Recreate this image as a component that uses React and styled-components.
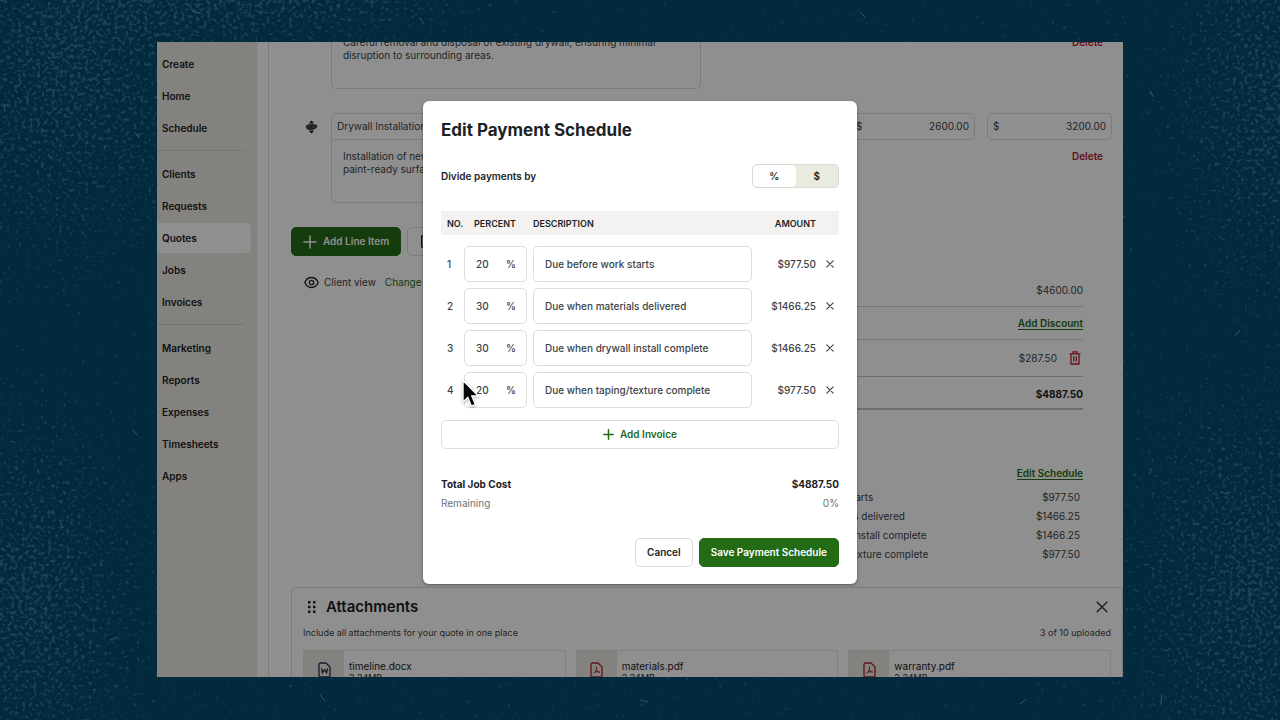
import React, {useState} from 'react'
import styled, {createGlobalStyle, css} from 'styled-components'

const colors = {
  ink: '#1c2326',
  text: '#3b4347',
  muted: '#6b7276',
  green: '#246b16',
  red: '#b3202c',
  line: '#dcdcdc',
  sand: '#ebe8e0',
}

const GlobalStyle = createGlobalStyle`
  * {
    box-sizing: border-box;
  }
  body {
    margin: 0;
    background-color: #02293c;
    color: ${colors.text};
    font-family: Inter, 'Liberation Sans', sans-serif;
    font-size: 10px;
    line-height: 13px;
  }
  button, input, textarea {
    font: inherit;
    color: inherit;
  }
  button {
    cursor: pointer;
  }
`

const Stage = styled.div`
  position: relative;
  height: 100vh;
  padding: 42px 157px 43px;
`

const Texture = styled.svg`
  position: absolute;
  inset: 0;
  width: 100%;
  height: 100%;
`

const Frame = styled.div`
  position: relative;
  display: flex;
  height: 100%;
  overflow: hidden;
  background-color: white;
`

/* Sidebar */

const Sidebar = styled.nav`
  flex: 0 0 100px;
  padding: 7px 6px 0 0;
  background-color: ${colors.sand};
`

const NavDivider = styled.hr`
  margin: 7px 7px 8px 0;
  border: 0;
  border-top: 1px solid #d3d0c7;
`

const NavLink = styled.a`
  display: flex;
  align-items: center;
  height: 30px;
  margin-bottom: 2px;
  padding-left: 5px;
  border-radius: 0 5px 5px 0;
  background-color: ${props => props.$active ? 'white' : 'transparent'};
  color: ${colors.ink};
  font-weight: 600;
  text-decoration: none;
`

/* Quote page */

const Main = styled.main`
  flex: 1;
  min-width: 0;
  margin-left: 11px;
  padding: 0 11px 0 22px;
  border-left: 1px solid ${colors.line};
`

const LineItems = styled.div`
  display: flex;
  flex-direction: column;
  gap: 24px;
  margin-top: -43px;
`

const LineItemRow = styled.div`
  display: grid;
  grid-template-columns: 28px minmax(0, 1fr) repeat(3, 125px);
  grid-template-rows: 27px 63px;
  column-gap: 12px;
`

const DragHandle = styled.span`
  display: flex;
  align-items: center;
  justify-content: flex-end;
  padding-right: 1px;
`

const NameInput = styled.input`
  min-width: 0;
  padding: 0 5px;
  border: 1px solid ${colors.line};
  border-radius: 5px 5px 0 0;
  background: none;
`

const DescriptionInput = styled.textarea`
  grid-column: 2;
  padding: 10px 11px;
  border: 1px solid ${colors.line};
  border-top: 0;
  border-radius: 0 0 5px 5px;
  background: none;
  resize: none;
  overflow: hidden;
`

const MoneyField = styled.label`
  display: flex;
  align-items: center;
  padding: 0 5px;
  border: 1px solid ${colors.line};
  border-radius: 5px;

  input {
    flex: 1;
    min-width: 0;
    padding: 0;
    border: 0;
    background: none;
    text-align: right;
  }
`

const DeleteButton = styled.button`
  grid-column: 5;
  justify-self: end;
  align-self: start;
  margin: 10px 9px 0 0;
  padding: 0;
  border: 0;
  background: none;
  color: ${colors.red};
  font-weight: 600;
`

const Actions = styled.div`
  display: flex;
  gap: 6px;
  margin-top: 24px;
`

const Button = styled.button`
  display: flex;
  align-items: center;
  justify-content: center;
  gap: 6px;
  height: 29px;
  padding: 0 11px;
  border: 1px solid ${colors.line};
  border-radius: 5px;
  background-color: white;
  color: ${colors.ink};
  font-weight: 600;

  ${props => props.$primary && css`
    border-color: ${colors.green};
    background-color: ${colors.green};
    color: white;
  `}

  ${props => props.$wide && css`
    width: 100%;
    margin-top: 9px;
    color: ${colors.green};
  `}
`

const OptionalButton = styled(Button)`
  justify-content: flex-start;
  width: 130px;
`

const Summary = styled.div`
  display: flex;
  justify-content: space-between;
  padding-right: 29px;
`

const ClientView = styled.div`
  display: flex;
  align-items: center;
  gap: 5px;
  height: 16px;
  margin: 18px 0 0 13px;

  a {
    margin-left: 4px;
    color: ${colors.green};
    text-decoration: none;
  }
`

const Totals = styled.div`
  width: 318px;
  padding-top: 18px;
`

const TotalRow = styled.div`
  display: flex;
  align-items: center;
  justify-content: flex-end;
  gap: 12px;
  height: 33px;
  border-bottom: 1px solid #d0d2d3;

  ${props => props.$tall && css`
    height: 37px;
    padding-right: 2px;
    border-color: #bfc1c2;
  `}

  ${props => props.$last && css`
    padding-top: 3px;
    border-bottom: 2px solid #bfc1c2;
    color: ${colors.ink};
    font-weight: 700;
  `}
`

const GreenLink = styled.a`
  border-bottom: 1px solid ${colors.green};
  color: ${colors.green};
  font-weight: 600;
  line-height: 12px;
  text-decoration: none;
`

const IconButton = styled.button`
  display: inline-flex;
  padding: 0;
  border: 0;
  background: none;
  color: ${props => props.$danger ? colors.red : colors.text};
`

const ScheduleHead = styled.div`
  display: flex;
  justify-content: flex-end;
  margin: 57px 0 8px;
`

const ScheduleLine = styled.div`
  display: flex;
  justify-content: space-between;
  padding-right: 3px;
  line-height: 19px;
`

const Attachments = styled.section`
  margin: 23px -11px 0 0;
  padding: 10px 11px 0;
  border: 1px solid ${colors.line};
  border-radius: 5px 0 0 0;
`

const AttachmentsHead = styled.div`
  display: flex;
  align-items: center;
  gap: 10px;
  padding: 0 3px 0 5px;

  h2 {
    flex: 1;
    margin: 0;
    color: ${colors.ink};
    font-size: 15px;
    font-weight: 600;
    line-height: 18px;
  }
`

const AttachmentsNote = styled.div`
  display: flex;
  justify-content: space-between;
  margin: 10px 0 11px;
  font-size: 9px;
`

const Files = styled.div`
  display: grid;
  grid-template-columns: repeat(3, minmax(0, 1fr));
  gap: 10px;
`

const FileCard = styled.div`
  display: flex;
  height: 40px;
  border: 1px solid #e6e6e6;
  color: ${colors.ink};
`

const FileThumb = styled.span`
  display: flex;
  align-items: center;
  justify-content: center;
  width: 40px;
  background-color: ${colors.sand};
  color: ${props => props.$type === 'docx' ? '#2b2a52' : colors.red};
`

const FileInfo = styled.div`
  padding: 9px 0 0 5px;

  small {
    display: block;
    font-size: 9px;
    line-height: 10px;
  }
`

/* Modal */

const Scrim = styled.div`
  position: absolute;
  inset: 0;
  display: flex;
  align-items: flex-start;
  justify-content: center;
  padding-top: 59px;
  background-color: rgba(0, 0, 0, 0.44);
`

const Modal = styled.div`
  position: relative;
  width: 434px;
  padding: 17px 18px;
  border-radius: 6px;
  background-color: white;
  box-shadow: 0 1px 3px rgba(0, 0, 0, 0.4);
`

const ModalTitle = styled.h1`
  margin: 0;
  color: ${colors.ink};
  font-size: 17px;
  line-height: 24px;
`

const DivideRow = styled.div`
  display: flex;
  align-items: center;
  justify-content: space-between;
  margin: 22px 0 23px;
  color: ${colors.ink};
  font-weight: 600;
`

const Toggle = styled.div`
  display: flex;
  width: 87px;
  height: 24px;
  border: 1px solid #d9dbd2;
  border-radius: 5px;
  background-color: #eaebdf;
  overflow: hidden;
`

const ToggleOption = styled.button`
  flex: 1;
  padding: 0;
  border: 0;
  border-radius: 5px;
  background-color: ${props => props.$active ? 'white' : 'transparent'};
  font-weight: 600;
`

const PaymentTable = styled.table`
  width: 100%;
  table-layout: fixed;
  border-collapse: collapse;
  font-weight: 500;

  th {
    height: 24px;
    padding: 0;
    background-color: #f4f2f1;
    color: ${colors.ink};
    font-size: 9px;
    font-weight: 600;
    text-align: left;
    white-space: nowrap;
  }
  td {
    padding: 3px 0;
  }
  tbody tr:first-child td {
    padding-top: 11px;
  }
  th:first-child, td:first-child {
    padding-left: 6px;
  }
  th:nth-child(2) {
    padding-left: 10px;
  }
  td:nth-child(2) {
    padding-right: 6px;
  }
  th:nth-child(4), td:nth-child(4) {
    text-align: right;
  }
  td:nth-child(5) {
    padding-left: 10px;
  }
`

const Field = styled.label`
  display: flex;
  align-items: center;
  height: 36px;
  padding: 0 10px 0 11px;
  border: 1px solid ${colors.line};
  border-radius: 5px;

  input {
    flex: 1;
    width: 100%;
    min-width: 0;
    padding: 0;
    border: 0;
    outline: 0;
    background: none;
  }
`

const ModalTotals = styled.div`
  margin: 26px 0 25px;
`

const ModalTotal = styled.div`
  display: flex;
  justify-content: space-between;
  color: ${props => props.$strong ? colors.ink : colors.muted};
  font-weight: ${props => props.$strong ? 700 : 400};
  line-height: 19px;
`

const ModalActions = styled.div`
  display: flex;
  justify-content: flex-end;
  gap: 6px;
`

const Pointer = styled.svg`
  position: absolute;
  top: 278px;
  left: 37px;
  pointer-events: none;
  filter: drop-shadow(0 1px 1px rgba(0, 0, 0, 0.3));
`

/* Icons */

const PlusIcon = ({size = 14, weight = 1.5}) => (
  <svg width={size} height={size} viewBox="0 0 14 14" fill="none" stroke="currentColor" strokeWidth={weight} strokeLinecap="round">
    <path d="M7 1v12M1 7h12" />
  </svg>
)

const CrossIcon = ({size, weight = 1}) => (
  <svg width={size} height={size} viewBox="0 0 10 10" fill="none" stroke="currentColor" strokeWidth={weight} strokeLinecap="round">
    <path d="M1 1l8 8M9 1L1 9" />
  </svg>
)

const MoveIcon = () => (
  <svg width="13" height="14" viewBox="0 0 14 14" fill={colors.ink}>
    <path d="M7 0l3 3H4zM7 14l-3-3h6z" />
    <path d="M1 5.500Q4 3.200 8 3.600l5 1.200q.8 1.400-.4 3.200L8 10.500q-3.500.4-6-1.300Q.4 7.500 1 5.500z" opacity="0.85" />
    <path d="M3 7.500l3-2.500M6.500 9l4-3" stroke="#777" strokeWidth="0.600" />
  </svg>
)

const EyeIcon = () => (
  <svg width="15" height="13" viewBox="0 0 15 13" fill="none" stroke={colors.ink} strokeWidth="1.300">
    <path d="M.8 6.500C2.200 3.200 4.600 1.500 7.500 1.500s5.300 1.700 6.700 5c-1.400 3.300-3.800 5-6.700 5s-5.300-1.700-6.700-5z" />
    <circle cx="7.500" cy="6.500" r="2.200" />
  </svg>
)

const TrashIcon = () => (
  <svg width="12" height="14" viewBox="0 0 12 14" fill="none" stroke="currentColor" strokeWidth="1.300">
    <path d="M.5 2.800h11M4 2.500V.900h4v1.600M2 3v10h8V3M4.700 5.300v5.200M7.300 5.300v5.200" />
  </svg>
)

const GripIcon = () => (
  <svg width="8" height="12" viewBox="0 0 8 12" fill={colors.ink}>
    <path d="M0 0h2.500v2.500H0zM5 0h2.500v2.500H5zM0 4.700h2.500v2.500H0zM5 4.700h2.500v2.500H5zM0 9.400h2.500v2.500H0zM5 9.400h2.500v2.500H5z" />
  </svg>
)

const FileIcon = ({type}) => (
  <svg width="13" height="16" viewBox="0 0 13 16" fill="none" stroke="currentColor" strokeWidth="1.300" strokeLinejoin="round">
    <path d="M1 2.500Q1 1 2.500 1H8l4 4v8.500q0 1.500-1.500 1.500h-8Q1 15 1 13.500z" />
    {type === 'docx'
      ? <path d="M3.500 6.500l1 4.500 2-3.500 2 3.500 1-4.500" />
      : <path strokeWidth="1" d="M6.300 4.500c.6 2.500 0 4.500-2.800 7M6.200 7.500c.8 1.800 2 2.700 3.800 2.700M4.500 10.300c1.500-.6 3.500-.8 5-.3" />}
  </svg>
)

const CheckBoxIcon = () => (
  <svg width="13" height="13" viewBox="0 0 13 13" fill="none" stroke={colors.ink} strokeWidth="1.400">
    <rect x="2.700" y=".7" width="10" height="11.600" rx="1" />
  </svg>
)

/* Speckled paper grain, heavier towards the corners */
const Grain = () => (
  <Texture aria-hidden="true">
    <defs>
      <radialGradient id="blob">
        <stop offset="0" stopColor="#fff" stopOpacity="0.9" />
        <stop offset="0.5" stopColor="#fff" stopOpacity="0.5" />
        <stop offset="1" stopColor="#fff" stopOpacity="0" />
      </radialGradient>
      <filter id="speckle" x="0" y="0" width="100%" height="100%" colorInterpolationFilters="sRGB">
        <feTurbulence type="fractalNoise" baseFrequency="0.27" numOctaves="2" seed="8" />
        <feColorMatrix values="0 0 0 0 1  0 0 0 0 1  0 0 0 0 1  1 0 0 0 0" result="noise" />
        <feComposite in="noise" in2="SourceGraphic" operator="arithmetic" k1="0" k2="1" k3="0.28" k4="-0.28" />
        <feColorMatrix values="0 0 0 0 0.11  0 0 0 0 0.26  0 0 0 0 0.34  0 0 0 5 -2.15" />
      </filter>
    </defs>
    <g filter="url(#speckle)">
      <rect width="100%" height="100%" fill="#fff" fillOpacity="0.06" />
      <ellipse cx="5%" cy="8%" rx="15%" ry="36%" fill="url(#blob)" />
      <ellipse cx="20%" cy="0%" rx="20%" ry="9%" fill="url(#blob)" />
      <ellipse cx="2%" cy="84%" rx="12%" ry="34%" fill="url(#blob)" />
      <ellipse cx="98%" cy="82%" rx="13%" ry="36%" fill="url(#blob)" />
      <ellipse cx="100%" cy="14%" rx="11%" ry="34%" fill="url(#blob)" />
    </g>
    <g stroke="#5f8593" strokeWidth="0.700" fill="none" opacity="0.700">
      <path d="M4 105l1 7M135 132l4 6M103 79l6 1M192 11l9 2M48 154l3 5M420 18l4 6M640 700l8 2M860 12l5 5M1150 90l3 7M1240 330l-5 6M1220 492q6 3 11 0M1152 468l-3 6M60 520l3 8M110 640l8-3M320 695l5 6M1020 704l7-5M133 430l4 5M1162 694l-1 10" />
    </g>
  </Texture>
)

const navGroups = [
  ['Create', 'Home', 'Schedule'],
  ['Clients', 'Requests', 'Quotes', 'Jobs', 'Invoices'],
  ['Marketing', 'Reports', 'Expenses', 'Timesheets', 'Apps'],
]

const lineItems = [
  {
    name: 'Drywall Removal',
    description: 'Careful removal and disposal of existing drywall, ensuring minimal disruption to surrounding areas.',
    cost: '1000.00',
    total: '1400.00',
  },
  {
    name: 'Drywall Installation',
    description: 'Installation of new drywall sheets, taped and sanded for a smooth,\npaint-ready surface.',
    cost: '2600.00',
    total: '3200.00',
  },
]

const payments = [
  {percent: '20', description: 'Due before work starts', amount: '$977.50'},
  {percent: '30', description: 'Due when materials delivered', amount: '$1466.25'},
  {percent: '30', description: 'Due when drywall install complete', amount: '$1466.25'},
  {percent: '20', description: 'Due when taping/texture complete', amount: '$977.50'},
]

const files = [
  {name: 'timeline.docx', type: 'docx'},
  {name: 'materials.pdf', type: 'pdf'},
  {name: 'warranty.pdf', type: 'pdf'},
]

const LineItem = ({item}) => (
  <LineItemRow>
    <DragHandle><MoveIcon /></DragHandle>
    <NameInput aria-label="Name" defaultValue={item.name} />
    <MoneyField><input aria-label="Quantity" defaultValue="1" /></MoneyField>
    <MoneyField>$<input aria-label="Unit cost" defaultValue={item.cost} /></MoneyField>
    <MoneyField>$<input aria-label="Total" defaultValue={item.total} /></MoneyField>
    <DescriptionInput aria-label="Description" defaultValue={item.description} />
    <DeleteButton>Delete</DeleteButton>
  </LineItemRow>
)

const PaymentModal = () => {
  const [unit, setUnit] = useState('%')

  return (
    <Modal role="dialog" aria-labelledby="modal-title">
      <ModalTitle id="modal-title">Edit Payment Schedule</ModalTitle>
      <DivideRow>
        Divide payments by
        <Toggle>
          {['%', '$'].map(option => (
            <ToggleOption key={option} $active={unit === option} onClick={() => setUnit(option)}>
              {option}
            </ToggleOption>
          ))}
        </Toggle>
      </DivideRow>
      <PaymentTable>
        <colgroup>
          <col width="23" />
          <col width="69" />
          <col />
          <col width="64" />
          <col width="23" />
        </colgroup>
        <thead>
          <tr>
            <th>NO.</th>
            <th>PERCENT</th>
            <th>DESCRIPTION</th>
            <th>AMOUNT</th>
            <th aria-label="Remove" />
          </tr>
        </thead>
        <tbody>
          {payments.map((payment, i) => (
            <tr key={payment.description}>
              <td>{i + 1}</td>
              <td><Field><input aria-label="Percent" defaultValue={payment.percent} />%</Field></td>
              <td><Field><input aria-label="Description" defaultValue={payment.description} /></Field></td>
              <td>{payment.amount}</td>
              <td><IconButton aria-label="Remove"><CrossIcon size={8} weight={1.4} /></IconButton></td>
            </tr>
          ))}
        </tbody>
      </PaymentTable>
      <Button $wide><PlusIcon size={11} weight={1.9} />Add Invoice</Button>
      <ModalTotals>
        <ModalTotal $strong><span>Total Job Cost</span><span>$4887.50</span></ModalTotal>
        <ModalTotal><span>Remaining</span><span>0%</span></ModalTotal>
      </ModalTotals>
      <ModalActions>
        <Button>Cancel</Button>
        <Button $primary>Save Payment Schedule</Button>
      </ModalActions>
      <Pointer width="22" height="32" viewBox="0 0 22 32">
        <path d="M3 1.500v21.500l4.800-4.500 3.600 8.700 4-1.700-3.600-8.500h6.600z" fill="#000" stroke="#fff" strokeWidth="1.400" />
      </Pointer>
    </Modal>
  )
}

const App = () => (
  <Stage>
    <GlobalStyle />
    <Grain />
    <Frame>
      <Sidebar>
        {navGroups.map((group, i) => (
          <React.Fragment key={group[0]}>
            {i > 0 && <NavDivider />}
            {group.map(name => (
              <NavLink key={name} href="#" $active={name === 'Quotes'}>{name}</NavLink>
            ))}
          </React.Fragment>
        ))}
      </Sidebar>
      <Main>
        <LineItems>
          {lineItems.map(item => <LineItem key={item.name} item={item} />)}
        </LineItems>
        <Actions>
          <Button $primary><PlusIcon />Add Line Item</Button>
          <OptionalButton aria-label="Add optional line item"><CheckBoxIcon /></OptionalButton>
        </Actions>
        <Summary>
          <ClientView><EyeIcon />Client view <a href="#">Change</a></ClientView>
          <Totals>
            <TotalRow>$4600.00</TotalRow>
            <TotalRow><GreenLink href="#">Add Discount</GreenLink></TotalRow>
            <TotalRow $tall>$287.50<IconButton $danger aria-label="Remove tax"><TrashIcon /></IconButton></TotalRow>
            <TotalRow $last>$4887.50</TotalRow>
            <ScheduleHead><GreenLink href="#">Edit Schedule</GreenLink></ScheduleHead>
            {payments.map(payment => (
              <ScheduleLine key={payment.description}>
                <span>{payment.description}</span>
                <span>{payment.amount}</span>
              </ScheduleLine>
            ))}
          </Totals>
        </Summary>
        <Attachments>
          <AttachmentsHead>
            <GripIcon />
            <h2>Attachments</h2>
            <IconButton aria-label="Close"><CrossIcon size={12} weight={1.3} /></IconButton>
          </AttachmentsHead>
          <AttachmentsNote>
            <span>Include all attachments for your quote in one place</span>
            <span>3 of 10 uploaded</span>
          </AttachmentsNote>
          <Files>
            {files.map(file => (
              <FileCard key={file.name}>
                <FileThumb $type={file.type}><FileIcon type={file.type} /></FileThumb>
                <FileInfo>{file.name}<small>2.24MB</small></FileInfo>
              </FileCard>
            ))}
          </Files>
        </Attachments>
      </Main>
      <Scrim>
        <PaymentModal />
      </Scrim>
    </Frame>
  </Stage>
)

export default App
